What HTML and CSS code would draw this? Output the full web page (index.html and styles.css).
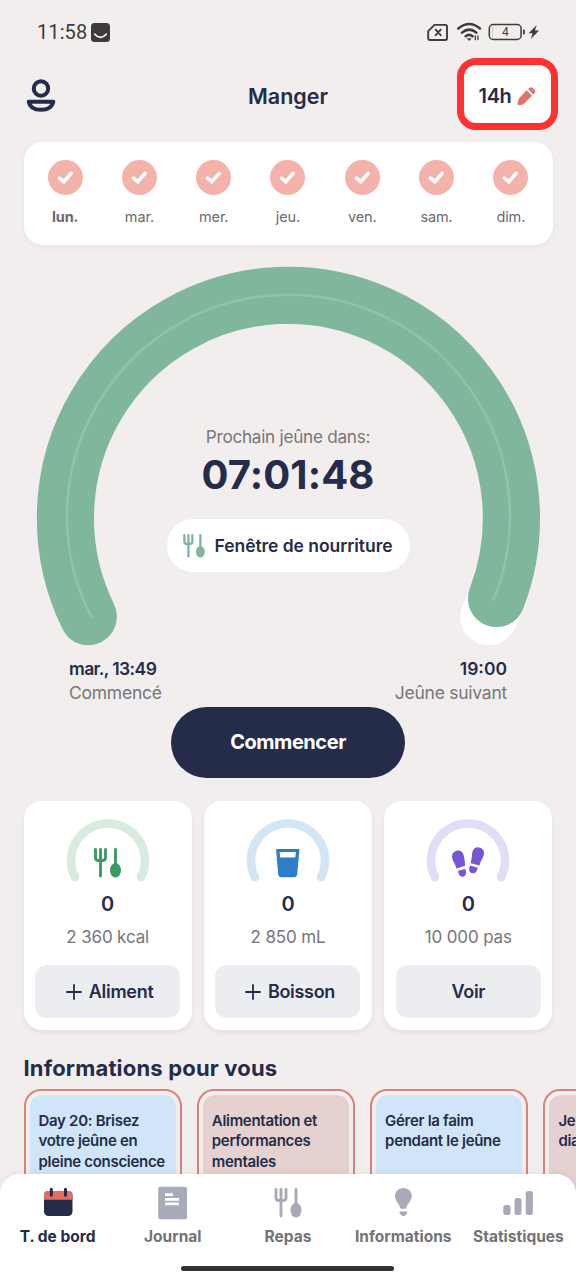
FILE: index.html
```html
<!DOCTYPE html>
<html lang="fr">
<head>
<meta charset="utf-8">
<title>Manger</title>
<link rel="stylesheet" href="styles.css">
</head>
<body>
<svg class="defs" width="0" height="0">
  <symbol id="cutlery" viewBox="0 0 27 30">
    <path d="M1.5 1.5v8q0 3 3 3h4q3 0 3-3v-8M6.500 1.500V28M21.500 1.500v18" fill="none" stroke="currentColor" stroke-width="2.900" stroke-linecap="round" stroke-linejoin="round"/>
    <ellipse cx="21.500" cy="22.300" rx="5.500" ry="7.200" fill="currentColor"/>
  </symbol>
  <symbol id="check" viewBox="0 0 36 36">
    <path d="M11.800 18.600l4.500 3.700 7.500-8.500" fill="none" stroke="#fff" stroke-width="3.700" stroke-linecap="round" stroke-linejoin="miter"/>
  </symbol>
  <symbol id="arc" viewBox="0 0 84 64">
    <path d="M9 58.200A37 37 0 1 1 75 58.200" fill="none" stroke="currentColor" stroke-width="8.600" stroke-linecap="round"/>
  </symbol>
</svg>
<main class="screen">
  <div class="status">
    <span class="clock">11:58</span>
    <svg class="face" width="19" height="19" viewBox="0 0 19 19"><rect width="19" height="19" rx="3.500" fill="#3d3b3b"/><path d="M3.800 11.200q5.700 6.400 11.400 0" fill="none" stroke="#fff" stroke-width="1.700" stroke-linecap="round"/></svg>
    <svg class="signals" width="114" height="20" viewBox="0 0 114 20">
      <g fill="none" stroke="#3d3b3b" stroke-width="1.900" stroke-linecap="round">
        <path d="M7.500 2.900H18.300q1.700 0 1.700 1.700V16.300q0 1.700-1.700 1.700H2.900q-1.700 0-1.700-1.700V9.200z" stroke-linejoin="round"/>
        <path d="M8.700 7.600l5 5.600M13.700 7.600l-5 5.600"/>
        <path d="M31.300 6.500q11-9 21.600 0" stroke-width="2.500"/>
        <path d="M35 10.600q7.300-6 14.400 0" stroke-width="2.500"/>
        <path d="M38.600 14.200q3.500-2.700 7 0" stroke-width="2.500"/>
        <path d="M48.300 14v3.700M50.900 13.800v3.700" stroke-width="1.300"/>
        <rect x="62.300" y="2.500" width="31.800" height="15" rx="4" stroke-width="1.500"/>
      </g>
      <path d="M39.700 16.300h5L42.200 19z" fill="#3d3b3b"/>
      <rect x="96" y="7.500" width="1.800" height="5" rx=".8" fill="#3d3b3b"/>
      <rect x="65" y="5" width="1" height="10" fill="#b4e0ab"/>
      <path d="M109.800 3l-8.200 8.200h4l-1.800 5.900 8.300-8.600h-4.200z" fill="#3d3b3b"/>
      <text x="78.300" y="14.300" text-anchor="middle" class="charge">4</text>
    </svg>
  </div>

  <header class="header">
    <svg class="avatar" width="30" height="34" viewBox="0 0 30 34" fill="none" stroke="#252c4a" stroke-width="4" stroke-linejoin="round"><circle cx="15" cy="9.500" r="7.200"/><path d="M2.700 22.800h24.600q-1.600 8-12.300 8T2.700 22.800z"/></svg>
    <h1 class="title">Manger</h1>
    <button class="plan"><span>14h</span>
      <svg width="19" height="19" viewBox="0 0 19 19" fill="#e07467"><path d="M9.600 3.300L15 8.700 7 16.700Q4 18.500.6 18.300.4 15 2 11.500z"/><path d="M11 2L12.800.8q1.600-1 3 .3l1.800 1.800q1.300 1.400.2 2.900L16.500 7.500z"/></svg>
    </button>
  </header>

  <section class="week">
    <div class="day day-first"><svg class="tick"><use href="#check"/></svg><span>lun.</span></div>
    <div class="day"><svg class="tick"><use href="#check"/></svg><span>mar.</span></div>
    <div class="day"><svg class="tick"><use href="#check"/></svg><span>mer.</span></div>
    <div class="day"><svg class="tick"><use href="#check"/></svg><span>jeu.</span></div>
    <div class="day"><svg class="tick"><use href="#check"/></svg><span>ven.</span></div>
    <div class="day"><svg class="tick"><use href="#check"/></svg><span>sam.</span></div>
    <div class="day"><svg class="tick"><use href="#check"/></svg><span>dim.</span></div>
  </section>

  <section class="dial">
    <svg class="ring" width="576" height="390" viewBox="0 259.500 576 390" fill="none" stroke-linecap="round">
      <path d="M88.300 616.200A223 223 0 1 1 488.700 616.200" stroke="#fff" stroke-width="57"/>
      <path d="M88.300 616.200A223 223 0 1 1 496.500 598" stroke="#80b69c" stroke-width="57.200"/>
      <path d="M91.500 617A221.500 221.500 0 1 1 493.700 599" stroke="#92c2ab" stroke-width="2.500"/>
    </svg>
    <div class="countdown">
      <p class="next">Prochain jeûne dans:</p>
      <p class="timer">07:01:48</p>
      <p class="window"><svg width="22" height="24"><use href="#cutlery"/></svg><span>Fenêtre de nourriture</span></p>
    </div>
  </section>

  <section class="times">
    <div><strong class="t-start">mar., 13:49</strong><span>Commencé</span></div>
    <div class="right"><strong>19:00</strong><span>Jeûne suivant</span></div>
  </section>

  <button class="start">Commencer</button>

  <section class="stats">
    <article class="stat food">
      <div class="gauge"><svg class="arc"><use href="#arc"/></svg><svg class="glyph" width="27" height="30"><use href="#cutlery"/></svg></div>
      <strong>0</strong><span class="goal">2 360 kcal</span>
      <button class="add"><svg class="plus" viewBox="0 0 16 16"><path d="M8 1v14M1 8h14"/></svg><span>Aliment</span></button>
    </article>
    <article class="stat drink">
      <div class="gauge"><svg class="arc"><use href="#arc"/></svg>
        <svg class="glyph" width="27" height="30" viewBox="0 0 27 30"><path fill-rule="evenodd" fill="#2c7fc6" d="M3 1h21.500q1 0 .9 1l-2.200 24.200q-.3 3-3.100 3H7.400q-2.900 0-3.200-3L2.100 2q-.1-1 .9-1zM5.600 4l.6 5.600h15.100l.6-5.600z"/></svg></div>
      <strong>0</strong><span class="goal">2 850 mL</span>
      <button class="add"><svg class="plus" viewBox="0 0 16 16"><path d="M8 1v14M1 8h14"/></svg><span>Boisson</span></button>
    </article>
    <article class="stat steps">
      <div class="gauge"><svg class="arc"><use href="#arc"/></svg>
        <svg class="glyph" width="34" height="32" viewBox="0 0 34 32" fill="#7757d1"><path d="M6.800 3.500C10.500 3 12.500 6 13.200 10.500q.8 4.500.8 8.300l-8.500 2.700Q4.500 18 2.200 14C-.5 8.500 2 4 6.800 3.500zM7 23.700l7.300-1.800q2.300 5.200-1.300 7.500Q8 31 7 23.700zM28.300.5C23.500-.5 21.500 3 21 7.500q-.3 5-1.300 8.800l8.700 2.200q.8-3.500 2.900-7C34.500 6 33 1.500 28.300.5zM19 18.500l7.800 2.200Q25.500 27 21 26.300q-4.500-1.500-2-7.800z"/></svg></div>
      <strong>0</strong><span class="goal">10 000 pas</span>
      <button><span>Voir</span></button>
    </article>
  </section>

  <h2 class="heading">Informations pour vous</h2>
  <section class="stories">
    <article class="story"><p class="blue">Day 20: Brisez<br>votre jeûne en<br>pleine conscience</p></article>
    <article class="story"><p class="rose">Alimentation et<br>performances<br>mentales</p></article>
    <article class="story"><p class="blue">Gérer la faim<br>pendant le jeûne</p></article>
    <article class="story"><p class="rose">Jeûne et<br>diabète</p></article>
  </section>

  <nav class="tabs">
    <a class="tab active"><svg width="34" height="34" viewBox="0 0 34 34"><rect x="3" y="5" width="28.500" height="25" rx="4.500" fill="#252c4a"/><path d="M3 13.700V9q0-4 4-4h20.500q4 0 4 4v4.700z" fill="#e76c5d"/><path d="M10.300 3.300v6M24.500 3.300v6" stroke="#252c4a" stroke-width="3" stroke-linecap="round"/></svg><span>T. de bord</span></a>
    <a class="tab"><svg width="34" height="34" viewBox="0 0 34 34"><rect x="2.200" y=".8" width="28.800" height="32.400" rx="2" fill="#a8abb7"/><path d="M9 8.600h8M9 13.300h14M9 17.900h14" stroke="#fff" stroke-width="2.800"/></svg><span>Journal</span></a>
    <a class="tab"><svg class="meal" width="34" height="30"><use href="#cutlery"/></svg><span>Repas</span></a>
    <a class="tab"><svg width="34" height="34" viewBox="0 0 34 34" fill="#a8abb7"><path d="M17.300 2c5 0 8.500 3.700 8.500 8 0 5-4.500 7.500-5.300 11.500q-.3 1.200-1.500 1.200h-3.500q-1.200 0-1.500-1.200C13.300 17.500 9 15 9 10c0-4.300 3.500-8 8.300-8z"/><path d="M14 25.400h6.700q1.200 1.200.2 2.400l-2.200 2q-1.300.8-2.700 0l-2.200-2q-1-1.200.2-2.400z"/></svg><span>Informations</span></a>
    <a class="tab"><svg width="34" height="34" viewBox="0 0 34 34" fill="#a8abb7"><rect x="2.300" y="19" width="7.300" height="10" rx="2.500"/><rect x="13.500" y="12" width="7" height="17" rx="2.500"/><rect x="24.700" y="5" width="7.200" height="24" rx="2.500"/></svg><span>Statistiques</span></a>
    <div class="homebar"></div>
  </nav>
</main>
</body>
</html>
```
FILE: styles.css
```css
* { box-sizing: border-box; }
body { margin: 0; background: #f2eeed; }
h1, h2, p { margin: 0; }
button { border: 0; padding: 0; font: inherit; color: inherit; }
svg { display: block; flex: none; }
.defs { display: none; }

.screen {
  position: relative;
  width: 576px;
  height: 1280px;
  overflow: hidden;
  display: flex;
  flex-direction: column;
  background: #f2eeed;
  color: #252c4a;
  font-family: Inter, "Liberation Sans", sans-serif;
}

/* Status bar */
.status { height: 58px; padding: 6px 35px 0 37px; display: flex; align-items: center; gap: 4px; }
.clock { font: 400 20px/24px Roboto, sans-serif; letter-spacing: .1px; color: #3d3b3b; width: 50px; white-space: nowrap; }
.signals { margin-left: auto; }
.charge { font: 400 12px Roboto, sans-serif; fill: #3d3b3b; }

/* Header */
.header {
  height: 72px;
  padding: 0 18px 0 26px;
  display: grid;
  grid-template-columns: 101px 1fr 101px;
  align-items: center;
}
.avatar { margin-top: 3px; }
.title { font-size: 21.500px; line-height: 28px; font-weight: 600; letter-spacing: 0; text-align: center; padding: 4px 8px 0 0; }
.plan {
  height: 72px;
  display: flex;
  align-items: center;
  justify-content: center;
  gap: 6px;
  padding: 4px 0 0;
  border: 7.500px solid #ff3131;
  border-radius: 19px;
  background: #fff;
  font-size: 20px;
  font-weight: 600;
  letter-spacing: -.4px;
}

/* Week */
.week {
  height: 103px;
  margin: 12px 23.500px 0;
  padding: 18px 4.500px 0;
  display: grid;
  grid-template-columns: repeat(7, 1fr);
  background: #fff;
  border-radius: 19px;
  box-shadow: 0 2px 5px rgba(80, 60, 50, .06);
}
.day { display: flex; flex-direction: column; align-items: center; gap: 12px; font-size: 14.500px; line-height: 20px; letter-spacing: -.1px; color: #6b6a6e; }
.day-first { font-weight: 700; }
.tick { width: 35px; height: 35px; border-radius: 50%; background: #f3b3ab; }

/* Dial */
.dial { display: grid; height: 390px; margin-top: 15px; }
.ring, .countdown { grid-area: 1 / 1; }
.countdown { display: flex; flex-direction: column; align-items: center; padding-top: 165px; }
.next { font-size: 17.200px; line-height: 24px; letter-spacing: -.28px; color: #77757a; }
.timer { margin-top: 1px; font-size: 40px; line-height: 50px; font-weight: 700; letter-spacing: .1px; }
.window {
  width: 243px;
  height: 53px;
  margin-top: 19px;
  padding-left: 16px;
  display: flex;
  align-items: center;
  gap: 10px;
  border-radius: 27px;
  background: #fff;
  font-size: 17.500px;
  font-weight: 600;
  letter-spacing: -.05px;
  white-space: nowrap;
}
.window svg { color: #80b69c; }

.times { height: 57px; padding: 7px 69px 0; display: flex; justify-content: space-between; font-size: 17.500px; line-height: 24px; }
.times strong, .times span { display: block; }
.times strong { font-weight: 600; }
.times .t-start { letter-spacing: -.6px; }
.times span { color: #77757a; letter-spacing: -.25px; }
.right { text-align: right; }

.start {
  align-self: center;
  flex: none;
  width: 234px;
  height: 70.500px;
  border-radius: 36px;
  background: #252c4a;
  color: #fff;
  font-size: 20px;
  font-weight: 700;
  letter-spacing: -.45px;
}

/* Daily stats */
.stats { display: grid; grid-template-columns: repeat(3, 1fr); gap: 12px; margin: 23.500px 23.500px 0; }
.stat {
  height: 229px;
  padding: 18px 11.500px 0;
  display: flex;
  flex-direction: column;
  align-items: center;
  background: #fff;
  border-radius: 18px;
  box-shadow: 0 3px 5px rgba(80, 60, 50, .07);
}
.gauge { display: grid; width: 84px; height: 66px; justify-items: center; align-items: end; }
.gauge > * { grid-area: 1 / 1; }
.arc { width: 84px; height: 64px; align-self: start; }
.glyph { margin-bottom: 7px; }
.food .arc { color: #d7ebdf; }
.food .glyph { color: #3b9b62; }
.drink .arc { color: #d3e6f5; }
.steps .arc { color: #e2dcf6; }
.steps .glyph { margin-bottom: 6px; }
.stat strong { font-size: 20px; line-height: 24px; font-weight: 600; margin-top: 7px; }
.goal { font-size: 17px; line-height: 24px; letter-spacing: -.15px; margin-top: 9px; color: #77757a; white-space: nowrap; }
.stat button {
  width: 145px;
  height: 53px;
  margin-top: 16px;
  display: flex;
  align-items: center;
  justify-content: center;
  gap: 7px;
  border-radius: 12px;
  background: #ecedf0;
  font-size: 18px;
  font-weight: 600;
  letter-spacing: -.3px;
}
.stat .add { padding-left: 4px; }
.plus { width: 16px; height: 16px; fill: none; stroke: #252c4a; stroke-width: 1.800; stroke-linecap: round; }

/* Information cards */
.heading { margin: 23px 23.500px 0; font-size: 22px; line-height: 30px; font-weight: 700; letter-spacing: .18px; white-space: nowrap; }
.stories { display: flex; gap: 15.300px; margin-top: 6px; padding-left: 23.500px; }
.story { flex: none; width: 158px; height: 158px; padding: 4px; border: 2px solid #d5847b; border-radius: 17px; }
.story p { height: 100%; padding: 16px 0 0 9px; border-radius: 12px; font-size: 15px; line-height: 20.300px; font-weight: 600; letter-spacing: -.3px; white-space: nowrap; }
.blue { background: #d0e5f8; }
.rose { background: #e5d2d0; }

/* Bottom navigation lies over the scrolling content */
.tabs {
  position: absolute;
  inset: auto 0 0;
  height: 106px;
  padding-top: 12px;
  display: grid;
  grid-template-columns: repeat(5, 1fr);
  grid-template-rows: 80px 5px;
  background: #fff;
  border-radius: 20px 20px 0 0;
  box-shadow: 0 0 8px rgba(80, 60, 50, .08);
}
.tab { display: flex; flex-direction: column; align-items: center; justify-content: space-between; height: 61px; font-size: 15.500px; line-height: 20px; font-weight: 700; color: #737277; white-space: nowrap; }
.active { color: #252c4a; }
.meal { color: #a8abb7; margin-top: 2px; }
.homebar { grid-column: 1 / -1; justify-self: center; width: 213px; height: 5px; border-radius: 3px; background: #333; }
```
